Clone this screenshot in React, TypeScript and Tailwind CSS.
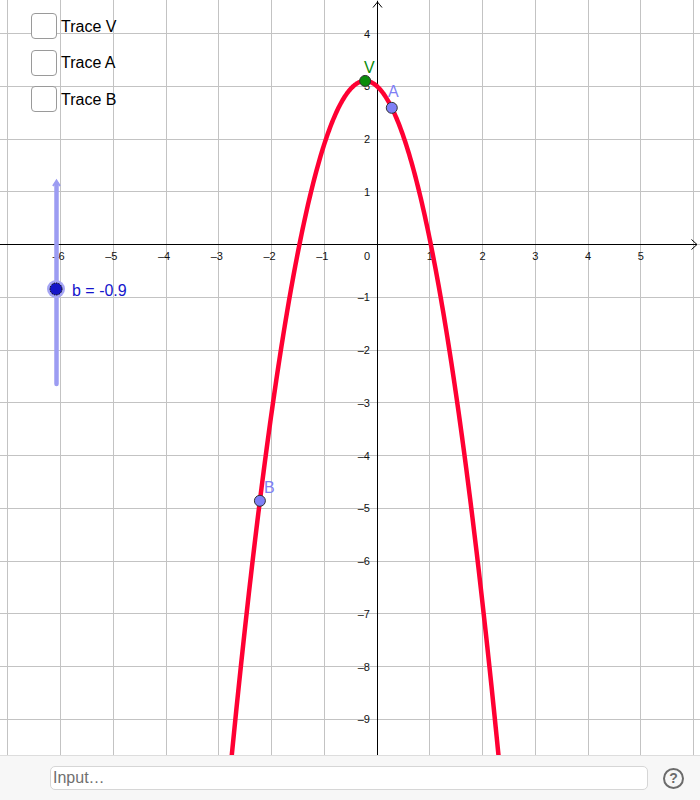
import React from "react";

const U = 52.75;
const OX = 377;
const OY = 244.5;
const px = (x: number) => OX + x * U;
const py = (y: number) => OY - y * U;
const snap = (v: number) => Math.floor(v) + 0.5;

const B_VAL = -0.9;
const f = (x: number) => -2 * x * x + B_VAL * x + 3;

function range(a: number, b: number) {
  const out: number[] = [];
  for (let i = a; i <= b; i++) out.push(i);
  return out;
}

function curvePath() {
  let d = "";
  for (let x = -2.85; x <= 2.4; x += 0.02) {
    d += (d ? " L" : "M") + px(x).toFixed(2) + " " + py(f(x)).toFixed(2);
  }
  return d;
}

const label = (n: number) => (n < 0 ? "\u2013" + -n : String(n));

const traces = ["Trace V", "Trace A", "Trace B"];

function Graph() {
  const vx = B_VAL / 4;
  const ax = 0.28;
  const bx = -2.22;
  const font = { fontFamily: '"Liberation Sans", Arial, sans-serif' };

  return (
    <svg width={700} height={755} className="block" style={font}>
      <rect width={700} height={755} fill="#ffffff" />
      {/* grid */}
      <g stroke="#c3c3c3" strokeWidth={1}>
        {range(-7, 6).map((n) => (
          <line key={"v" + n} x1={snap(px(n))} y1={0} x2={snap(px(n))} y2={755} />
        ))}
        {range(-9, 4).map((n) => (
          <line key={"h" + n} x1={0} y1={snap(py(n))} x2={700} y2={snap(py(n))} />
        ))}
      </g>
      {/* axes */}
      <g stroke="#000" strokeWidth={1} fill="none">
        <line x1={0} y1={OY} x2={697} y2={OY} />
        <line x1={snap(OX)} y1={1} x2={snap(OX)} y2={755} />
        <path d={`M${snap(OX) - 4.5} 7.5 L${snap(OX)} 2 L${snap(OX) + 4.5} 7.5`} />
        <path d={`M691.5 ${OY - 5} L697 ${OY} L691.5 ${OY + 5}`} />
      </g>
      {/* axis labels */}
      <g fontSize={11} fill="#111">
        {range(-6, 5)
          .filter((n) => n !== 0)
          .map((n) => (
            <text key={"xl" + n} x={px(n) + (n < 0 ? -2 : 0)} y={260} textAnchor="middle">
              {label(n)}
            </text>
          ))}
        <text x={370} y={260} textAnchor="end">
          0
        </text>
        {range(-9, 4)
          .filter((n) => n !== 0)
          .map((n) => (
            <text key={"yl" + n} x={370} y={py(n) + 4} textAnchor="end">
              {label(n)}
            </text>
          ))}
      </g>
      {/* slider */}
      <g>
        <line x1={56.5} y1={184} x2={56.5} y2={384} stroke="#9c9cf2" strokeWidth={4.5} strokeLinecap="round" />
        <path d="M53 186 L56.5 180.5 L60 186" stroke="#9c9cf2" strokeWidth={2} fill="none" />
        <circle cx={56} cy={289} r={9} fill="#a5a5f5" />
        <circle cx={56} cy={289} r={6} fill="#1515c8" stroke="#000" strokeWidth={1} strokeDasharray="1.5 1" />
        <text x={72} y={296} fontSize={16} fill="#1515cc">
          b = -0.9
        </text>
      </g>
      {/* curve */}
      <path d={curvePath()} stroke="#ff0033" strokeWidth={4.5} fill="none" strokeLinejoin="round" />
      {/* points */}
      <g stroke="#333" strokeWidth={1}>
        <circle cx={px(vx)} cy={py(f(vx))} r={5.5} fill="#0a8c0a" />
        <circle cx={px(ax)} cy={py(f(ax))} r={5.5} fill="#7f7ff5" />
        <circle cx={px(bx)} cy={py(f(bx))} r={5.5} fill="#7f7ff5" />
      </g>
      <g fontSize={16}>
        <text x={364} y={73} fill="#0a8c0a">
          V
        </text>
        <text x={388} y={97} fill="#7f7ff5">
          A
        </text>
        <text x={264} y={493} fill="#7f7ff5">
          B
        </text>
      </g>
    </svg>
  );
}

export default function App() {
  return (
    <div className="w-[700px] h-[800px] flex flex-col bg-white overflow-hidden font-['Liberation_Sans',Arial,sans-serif]">
      <div className="relative h-[755px]">
        <Graph />
        <div className="absolute left-[31px] top-[13px] flex flex-col gap-[10.5px]">
          {traces.map((t) => (
            <label key={t} className="flex items-center gap-[4px] h-[26px]">
              <span className="w-[26px] h-[26px] rounded-[4px] border border-[#9a9a9a] bg-white" />
              <span className="text-[16px] text-black leading-none pt-[1px]">{t}</span>
            </label>
          ))}
        </div>
      </div>
      <div className="flex-1 flex items-center border-t border-[#dddddd] bg-[#f7f7f7] pl-[50px] pr-[16px] gap-[15px]">
        <input
          placeholder="Input…"
          className="w-[598px] h-[24px] rounded-[5px] border border-[#d6d6d6] bg-white px-[2px] text-[16px] text-[#333] placeholder:text-[#6f6f6f] outline-none"
        />
        <span className="w-[21px] h-[21px] rounded-full border-2 border-[#6b6b6b] flex items-center justify-center text-[14px] font-bold text-[#6b6b6b] leading-none">
          ?
        </span>
      </div>
    </div>
  );
}
